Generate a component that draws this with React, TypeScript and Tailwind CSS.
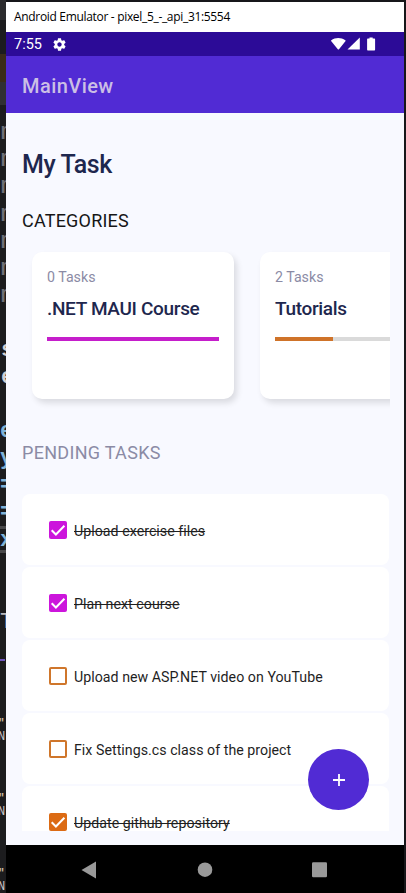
import React from "react";

type Fragment = { text: string; gap: string; style: string };

const m = "text-[23px] font-bold text-[#6f7076] pl-px";
const bold = "text-[22px] font-bold text-[#d0d0d4] pl-px";
const blue = "text-[22px] font-bold text-[#7fb2d8]";
const quote = "text-[11px] font-bold text-[#c9bda4] -ml-[2px]";
const small = "text-[12px] text-[#c4c4c8] -ml-[2px]";

// Editor lines that peek out to the left of the emulator window.
const fragments: Fragment[] = [
  { text: "m", gap: "h-[143px]", style: m },
  { text: "m", gap: "h-[27px]", style: m },
  { text: "m", gap: "h-[27px]", style: m },
  { text: "m", gap: "h-[28px]", style: m },
  { text: "m", gap: "h-[27px]", style: m },
  { text: "m", gap: "h-[27px]", style: m },
  { text: "m", gap: "h-[27px]", style: m },
  { text: "s", gap: "h-[55px]", style: bold },
  { text: "e", gap: "h-[27px]", style: bold },
  { text: "e", gap: "h-[54px]", style: blue },
  { text: "y", gap: "h-[27px]", style: blue },
  { text: "=", gap: "h-[27px]", style: blue },
  { text: "=", gap: "h-[27px]", style: blue },
  { text: "x", gap: "h-[28px]", style: blue },
  { text: "T", gap: "h-[82px]", style: "text-[22px] text-[#b8b8bc]" },
  { text: "\"", gap: "h-[100px]", style: quote },
  { text: "N", gap: "h-[14px]", style: small },
  { text: "\"", gap: "h-[61px]", style: quote },
  { text: "N", gap: "h-[14px]", style: small },
  { text: "\"", gap: "h-[61px]", style: quote },
  { text: "N", gap: "h-[14px]", style: small },
];

function EditorEdge() {
  return (
    <div className="relative h-full w-[6px] shrink-0 overflow-hidden bg-[#1c1c1e] font-['Liberation_Mono',monospace]">
      <div className="absolute top-0 h-[20px] w-full bg-[#2b2b2d]" />
      <div className="absolute top-[54px] h-[28px] w-full bg-[#3a2c18]" />
      <div className="absolute top-[82px] h-[23px] w-full bg-[#303033]" />
      <div className="absolute top-[526px] h-[3px] w-full bg-[#48484a]" />
      <div className="absolute top-[550px] h-[3px] w-full bg-[#48484a]" />
      <div className="absolute top-[659px] h-[2px] w-[5px] bg-[#6e55bd]" />
      <div className="relative flex flex-col">
        {fragments.map((f, i) => (
          <div key={i} className={`flex shrink-0 items-end leading-5 ${f.gap} ${f.style}`}>
            {f.text}
          </div>
        ))}
      </div>
    </div>
  );
}

function CategoryCard({ count, name, progress, color }: { count: string; name: string; progress: number; color: string }) {
  return (
    <div className="flex h-[147px] w-[202px] shrink-0 flex-col rounded-[10px] bg-white px-[15px] pt-[16px] shadow-[3px_4px_6px_rgba(0,0,0,0.12)]">
      <p className="text-[14.2px] leading-[18px] text-[#8b8ba5]">{count}</p>
      <p className="mt-[11px] whitespace-nowrap text-[19px] font-medium leading-[24px] tracking-[-0.33px] text-[#1e274e]">{name}</p>
      <div className="mt-[16px] h-[4px] bg-[#dadada]">
        <div className={`h-full ${color}`} style={{ width: `${progress}%` }} />
      </div>
    </div>
  );
}

type Hue = "magenta" | "orange";

function CheckBox({ checked, hue }: { checked: boolean; hue: Hue }) {
  if (!checked) {
    return <span className="size-[18px] shrink-0 rounded-[2px] border-2 border-[#cf762b]" />;
  }
  return (
    <span className={`size-[18px] shrink-0 rounded-[2px] ${hue === "magenta" ? "bg-[#cc15dc]" : "bg-[#dc6b14]"}`}>
      <svg viewBox="0 0 18 18" className="size-[18px]" fill="none" stroke="#fff" strokeWidth="2">
        <path d="M2.7 9.3 6.9 13.5 15.4 4.8" />
      </svg>
    </span>
  );
}

function TaskRow({ text, done, hue }: { text: string; done: boolean; hue: Hue }) {
  return (
    <div className="flex h-[71px] shrink-0 items-center rounded-[8px] bg-white pl-[27px] pt-px">
      <CheckBox checked={done} hue={hue} />
      <span className={`ml-[7px] whitespace-nowrap pt-px text-[14.2px] leading-5 tracking-[0.03px] text-[#1f1f1f] ${done ? "line-through decoration-1" : ""}`}>
        {text}
      </span>
    </div>
  );
}

const tasks: { text: string; done: boolean; hue: Hue }[] = [
  { text: "Upload exercise files", done: true, hue: "magenta" },
  { text: "Plan next course", done: true, hue: "magenta" },
  { text: "Upload new ASP.NET video on YouTube", done: false, hue: "orange" },
  { text: "Fix Settings.cs class of the project", done: false, hue: "orange" },
  { text: "Update github repository", done: true, hue: "orange" },
];

export default function App() {
  return (
    <div className="flex h-[893px] w-[406px] overflow-hidden bg-[#17171a] font-[Roboto,sans-serif]">
      <EditorEdge />
      <div className="relative mt-[2px] flex w-[398px] shrink-0 flex-col bg-[#f8f9ff]">
        <div className="flex h-[30px] shrink-0 items-center bg-white pl-[8px] font-['Open_Sans','Noto_Sans',sans-serif] text-[12px] text-black">
          <span className="whitespace-nowrap tracking-[-0.32px]">Android Emulator - pixel_5_-_api_31:5554</span>
        </div>

        <div className="flex h-[24px] shrink-0 items-center bg-[#2c0b97] pl-[8px] pr-[28px] text-white">
          <span className="pt-[2px] text-[14.5px] leading-6">7:55</span>
          <svg viewBox="0 0 24 24" className="ml-[10px] size-[15px]" fill="#fff">
            <path d="M19.43 12.98c.04-.32.07-.64.07-.98s-.03-.66-.07-.98l2.11-1.65c.19-.15.24-.42.12-.64l-2-3.46c-.12-.22-.39-.3-.61-.22l-2.49 1c-.52-.4-1.08-.73-1.69-.98l-.38-2.65C14.46 2.18 14.25 2 14 2h-4c-.25 0-.46.18-.49.42l-.38 2.65c-.61.25-1.17.59-1.69.98l-2.49-1c-.23-.09-.49 0-.61.22l-2 3.46c-.13.22-.07.49.12.64l2.11 1.65c-.04.32-.07.65-.07.98s.03.66.07.98l-2.11 1.65c-.19.15-.24.42-.12.64l2 3.46c.12.22.39.3.61.22l2.49-1c.52.4 1.08.73 1.69.98l.38 2.65c.03.24.24.42.49.42h4c.25 0 .46-.18.49-.42l.38-2.65c.61-.25 1.17-.59 1.69-.98l2.49 1c.23.09.49 0 .61-.22l2-3.46c.12-.22.07-.49-.12-.64l-2.11-1.65zM12 15.5c-1.93 0-3.5-1.57-3.5-3.5s1.57-3.5 3.5-3.5 3.500 1.57 3.500 3.500-1.570 3.500-3.500 3.500z" />
          </svg>
          <svg viewBox="0 0 45 14" className="ml-auto h-[14px] w-[45px]" fill="#fff">
            <path d="M.3 3.200C4.200.3 10.200.3 14.300 3.200Q14.900 3.700 14.400 4.300L8 12.300Q7.400 12.900 6.800 12.300L.3 4.300Q-.2 3.700.3 3.200Z" />
            <path d="M16.500 12.500H28.800V.6Z" />
            <path d="M38.500 1.500V.5h3.200v1h1.400c.6 0 1 .4 1 1v9.900c0 .6-.4 1-1 1h-6c-.6 0-1-.4-1-1V2.500c0-.6.4-1 1-1Z" />
          </svg>
        </div>

        <div className="flex h-[57px] shrink-0 items-center bg-[#512bd4] pl-[16px] pt-[2px]">
          <h1 className="text-[20px] font-medium tracking-[0.45px] text-[#cbbfe5]">MainView</h1>
        </div>

        <div className="flex h-[732px] shrink-0 flex-col overflow-hidden px-[16px]">
          <h2 className="mt-[36px] text-[25px] font-medium leading-[32px] tracking-[-0.4px] text-[#1e274e]">My Task</h2>
          <p className="mt-[28px] text-[18px] leading-[24px] tracking-[0.2px] text-[#161616]">CATEGORIES</p>
          <div className="-mr-[2px] mt-[11px] flex h-[170px] shrink-0 gap-[26px] overflow-hidden pl-[10px] pt-[8px]">
            <CategoryCard count="0 Tasks" name=".NET MAUI Course" progress={100} color="bg-[#c51ecb]" />
            <CategoryCard count="2 Tasks" name="Tutorials" progress={33.6} color="bg-[#cf7329]" />
          </div>
          <p className="mt-[27px] text-[18px] leading-[24px] tracking-[0.3px] text-[#8b8ba5]">PENDING TASKS</p>
          <div className="-mr-[1px] mt-[29px] flex h-[337px] shrink-0 flex-col gap-[2px] overflow-hidden">
            {tasks.map((t) => (
              <TaskRow key={t.text} {...t} />
            ))}
          </div>
        </div>

        <div className="flex h-[48px] shrink-0 items-center bg-black">
          <svg viewBox="0 0 398 48" className="h-[48px] w-[398px]" fill="#999">
            <path d="M75.500 25 90 16.500V33.500Z" />
            <circle cx="199" cy="24.700" r="7.300" />
            <rect x="306" y="17.200" width="15" height="15" rx="1.200" />
          </svg>
        </div>

        <button className="absolute left-[302px] top-[747px] flex size-[61px] items-center justify-center rounded-full bg-[#512bd4]" aria-label="Add">
          <svg viewBox="0 0 12 12" className="size-[12px]" stroke="#fff" strokeWidth="1.800">
            <path d="M6 0V12M0 6H12" />
          </svg>
        </button>
      </div>
    </div>
  );
}
